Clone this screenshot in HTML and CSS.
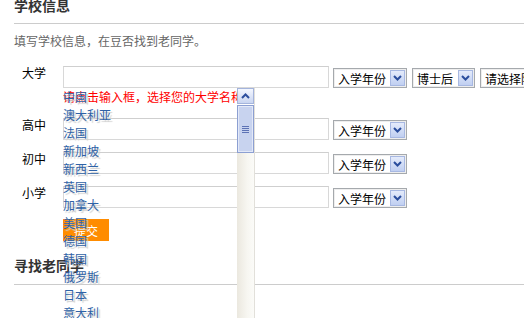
FILE: index.html
```html
<!DOCTYPE html>
<html lang="zh-CN">
<head>
    <meta charset="UTF-8">
    <title>学校信息</title>
    <link rel="stylesheet" href="styles.css">
</head>
<body>
    <div class="page">
        <h2 class="section-title">学校信息</h2>
        <p class="intro">填写学校信息，在豆否找到老同学。</p>

        <div class="row">
            <label class="row-label">大学</label>
            <div class="field field-suggest">
                <input class="text-input" type="text">
                <div class="hint">请点击输入框，选择您的大学名称</div>
                <div class="suggest">
                    <ul class="suggest-list">
                        <li>中国</li>
                        <li>澳大利亚</li>
                        <li>法国</li>
                        <li>新加坡</li>
                        <li>新西兰</li>
                        <li>英国</li>
                        <li>加拿大</li>
                        <li>美国</li>
                        <li>德国</li>
                        <li>韩国</li>
                        <li>俄罗斯</li>
                        <li>日本</li>
                        <li>意大利</li>
                    </ul>
                    <div class="scrollbar">
                        <div class="scroll-up">
                            <svg width="9" height="6" viewBox="0 0 9 6"><path d="M1 5 L4.5 1.5 L8 5" fill="none" stroke="#2d4f9e" stroke-width="2"/></svg>
                        </div>
                        <div class="scroll-thumb">
                            <span class="grip"></span>
                        </div>
                        <div class="scroll-track"></div>
                    </div>
                </div>
            </div>
            <div class="select year">入学年份<span class="arrow"></span></div>
            <div class="select degree">博士后<span class="arrow"></span></div>
            <div class="select dept">请选择院系<span class="arrow"></span></div>
        </div>

        <div class="row">
            <label class="row-label">高中</label>
            <div class="field">
                <input class="text-input" type="text">
            </div>
            <div class="select year">入学年份<span class="arrow"></span></div>
        </div>

        <div class="row">
            <label class="row-label">初中</label>
            <div class="field">
                <input class="text-input" type="text">
            </div>
            <div class="select year">入学年份<span class="arrow"></span></div>
        </div>

        <div class="row">
            <label class="row-label">小学</label>
            <div class="field">
                <input class="text-input" type="text">
            </div>
            <div class="select year">入学年份<span class="arrow"></span></div>
        </div>

        <div class="actions">
            <button class="submit" type="button">提交</button>
        </div>

        <h2 class="section-title second">寻找老同学</h2>
    </div>
</body>
</html>
```

FILE: styles.css
```css
html, body {
    height: 100%;
}

body {
    margin: 0;
    background-color: #fff;
    font-family: "Noto Sans CJK SC", "Liberation Sans", sans-serif;
    font-size: 12px;
    color: #000;
    overflow: hidden;
}

.page {
    padding-left: 14px;
}

.section-title {
    margin: -5px 0 0;
    font-size: 14px;
    line-height: 20px;
    font-weight: bold;
    color: #333;
    padding-bottom: 8px;
    border-bottom: 1px solid #ccc;
}

.section-title.second {
    margin-top: 14px;
    padding-bottom: 9px;
}

.intro {
    margin: 8px 0 0;
    line-height: 18px;
    color: #666;
}

.row {
    display: flex;
    align-items: flex-start;
    margin-top: 12px;
}

.intro + .row {
    margin-top: 16px;
}

.row-label {
    flex-shrink: 0;
    width: 41px;
    padding-left: 8px;
    line-height: 14px;
    white-space: nowrap;
}

.field {
    position: relative;
    flex-shrink: 0;
    width: 266px;
    margin-right: 4px;
}

.field-suggest {
    z-index: 2;
}

.text-input {
    display: block;
    box-sizing: border-box;
    width: 266px;
    height: 22px;
    margin: 0;
    border: 1px solid #d8d8d8;
    border-top-color: #cfcfcf;
    background: #fff;
}

.hint {
    line-height: 18px;
    color: #f00;
    white-space: nowrap;
    overflow: hidden;
}

.suggest {
    position: absolute;
    left: 0;
    top: 22px;
    width: 192px;
    height: 232px;
    display: flex;
}

.suggest-list {
    list-style: none;
    margin: 0;
    padding: 0;
    width: 175px;
}

.suggest-list li {
    line-height: 18px;
    color: #2f62a6;
    text-shadow: 2px 2px 1px #cfcfcf;
}

.scrollbar {
    width: 17px;
    display: flex;
    flex-direction: column;
    border-right: 1px solid #e2e0da;
}

.scroll-up {
    box-sizing: border-box;
    height: 16px;
    display: flex;
    justify-content: center;
    align-items: center;
    border: 1px solid #a4b4dc;
    background: linear-gradient(#f4f7ff, #c9d5f1);
}

.scroll-thumb {
    box-sizing: border-box;
    height: 48px;
    margin-top: 1px;
    display: flex;
    justify-content: center;
    align-items: center;
    border: 1px solid #8c9fd2;
    background: #c8d3ef;
    box-shadow: inset 0 0 0 1px #e3e9f8;
}

.grip {
    width: 7px;
    height: 7px;
    background: repeating-linear-gradient(#5d72b5 0, #5d72b5 1px, transparent 1px, transparent 2px);
}

.scroll-track {
    flex: 1;
    background: linear-gradient(90deg, #ebe8df, #f7f6f1 60%, #fbfbf8);
}

.select {
    box-sizing: border-box;
    height: 20px;
    margin-top: 2px;
    margin-right: 5px;
    padding-left: 4px;
    display: flex;
    align-items: center;
    justify-content: space-between;
    border: 1px solid #a5a9ad;
    box-shadow: inset 0 0 0 1px #eee;
    background: #fff;
    white-space: nowrap;
    flex-shrink: 0;
}

.select.year {
    width: 74px;
}

.select.degree {
    width: 63px;
}

.select.dept {
    width: 45px;
    margin-right: 0;
    border-right: none;
    justify-content: flex-start;
    overflow: hidden;
}

.arrow {
    box-sizing: border-box;
    width: 15px;
    height: 16px;
    margin-right: 1px;
    flex-shrink: 0;
    border: 1px solid #a7b8e2;
    background:
        url("data:image/svg+xml,%3Csvg xmlns='http://www.w3.org/2000/svg' width='9' height='6'%3E%3Cpath d='M1 1 L4.5 4.5 L8 1' fill='none' stroke='%232a4d9d' stroke-width='2'/%3E%3C/svg%3E") center no-repeat,
        linear-gradient(#e4ebfb, #c0cff1);
}

.actions {
    margin-top: 11px;
    padding-left: 49px;
}

.submit {
    width: 46px;
    height: 22px;
    padding: 0;
    border: none;
    background-color: #ff8c00;
    color: #fff;
    font-family: inherit;
    font-size: 12px;
}
```
